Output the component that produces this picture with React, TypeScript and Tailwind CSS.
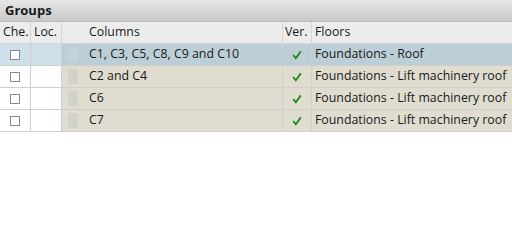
import React from 'react';

type Row = { columns: string; floors: string; selected?: boolean };

const rows: Row[] = [
  { columns: 'C1, C3, C5, C8, C9 and C10', floors: 'Foundations - Roof', selected: true },
  { columns: 'C2 and C4', floors: 'Foundations - Lift machinery roof' },
  { columns: 'C6', floors: 'Foundations - Lift machinery roof' },
  { columns: 'C7', floors: 'Foundations - Lift machinery roof' },
];

function Check() {
  return (
    <svg width="10" height="10" viewBox="0 0 10 10">
      <path d="M1.2 5 L3.8 8.2 L8.8 1.4" fill="none" stroke="#1a8a1a" strokeWidth="1.8" />
    </svg>
  );
}

export default function App() {
  return (
    <div className="w-[512px] h-[245px] bg-white text-[12.35px] text-[#1a1a1a] overflow-hidden" style={{ fontFamily: '"Open Sans", "Noto Sans", sans-serif' }}>
      <div className="h-[22px] flex items-center pl-[5px] font-bold text-[13px] bg-gradient-to-b from-[#e6e6e6] to-[#c9c9c9] border-b border-[#bdbdbd]">
        Groups
      </div>
      <div className="grid grid-cols-[31px_31px_221px_29px_1fr] h-[22px] bg-[#ececec] border-b border-[#d5d5d5]">
        <div className="pl-[3px] flex items-center border-r border-[#d5d5d5]">Che.</div>
        <div className="pl-[3px] flex items-center border-r border-[#d5d5d5]">Loc.</div>
        <div className="pl-[27px] flex items-center border-r border-[#d5d5d5]">Columns</div>
        <div className="pl-[2px] flex items-center border-r border-[#d5d5d5]">Ver.</div>
        <div className="pl-[3px] flex items-center whitespace-nowrap">Floors</div>
      </div>
      {rows.map((r, i) => (
        <div key={i} className="grid grid-cols-[31px_31px_221px_29px_1fr] h-[22px] border-b border-[#cfcfcf]">
          <div className={`flex items-center justify-center border-r border-[#cfcfcf] ${r.selected ? 'bg-[#cfe0ea]' : 'bg-white'}`}>
            <div className="w-[10px] h-[10px] border border-[#8a8a8a] bg-white" />
          </div>
          <div className={`border-r border-[#cfcfcf] ${r.selected ? 'bg-[#cfe0ea]' : 'bg-white'}`} />
          <div className={`flex items-center pl-[6px] gap-[11px] border-r border-[#cfcfcf] ${r.selected ? 'bg-[#bccfd6]' : 'bg-[#e0ddd0]'}`}>
            <div className={`w-[10px] h-[15px] ${r.selected ? 'bg-[#c6d4d9]' : 'bg-[#d2d2cc]'}`} />
            <span className="whitespace-nowrap">{r.columns}</span>
          </div>
          <div className={`flex items-center justify-center border-r border-[#cfcfcf] ${r.selected ? 'bg-[#bccfd6]' : 'bg-[#e0ddd0]'}`}>
            <Check />
          </div>
          <div className={`flex items-center pl-[3px] whitespace-nowrap overflow-hidden ${r.selected ? 'bg-[#bccfd6]' : 'bg-[#e0ddd0]'}`}>
            {r.floors}
          </div>
        </div>
      ))}
    </div>
  );
}
